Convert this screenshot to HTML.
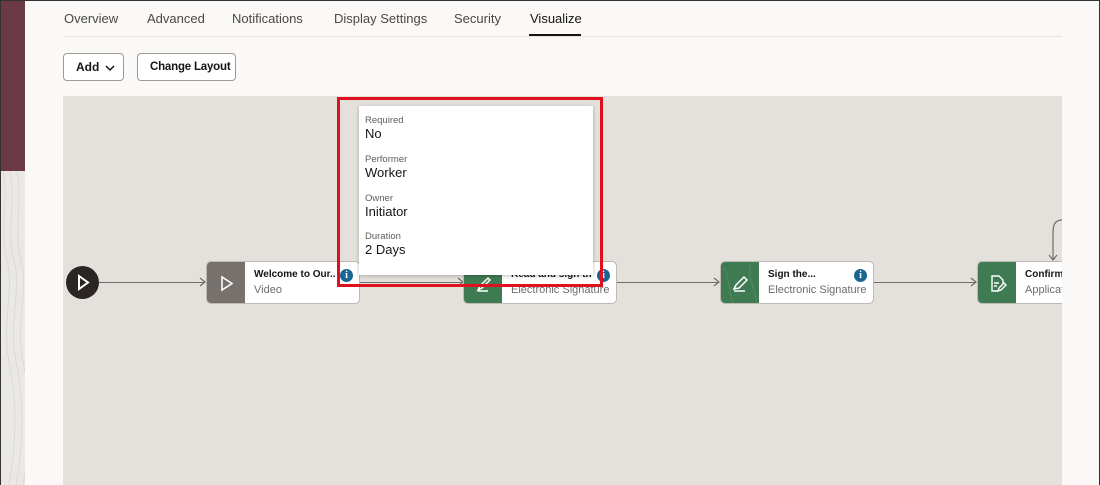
<!DOCTYPE html>
<html><head><meta charset="utf-8">
<style>
*{box-sizing:border-box;margin:0;padding:0}
body{width:1100px;height:485px;overflow:hidden;background:#faf9f8;font-family:"Liberation Sans",sans-serif;position:relative;color:#161513}
.frame{position:absolute;left:0;top:0;width:1100px;height:485px;border:1px solid #333;border-bottom:none;pointer-events:none;z-index:20}
.strip{position:absolute;left:1px;top:0;width:24px;height:485px;background:#eae8e5}
.strip .m{position:absolute;left:0;top:0;width:24px;height:171px;background:#6b3a45}
.tabs{position:absolute;left:63px;top:0;height:37px;width:999px;border-bottom:1px solid #e6e4e1}
.tab{position:absolute;top:11px;font-size:13px;color:#4a4845;white-space:nowrap}
.tab.act{color:#161513}
.ul{position:absolute;left:529px;top:34px;width:52px;height:2px;background:#161513}
.btn{position:absolute;top:53px;height:28px;border:1px solid #9e9a95;border-radius:4px;background:#fff;font-size:12px;font-weight:bold;color:#161513;line-height:26px;padding-left:12px;white-space:nowrap}
.canvas{position:absolute;left:63px;top:96px;width:999px;height:389px;background:#e4e1dd;overflow:hidden}
.node{position:absolute;top:165px;height:43px;width:154px;background:#fff;border:1px solid #bdb9b3;border-radius:5px;overflow:hidden}
.node .ic{position:absolute;left:0;top:0;width:38px;height:43px;background:#3f7b52}
.node .t{position:absolute;left:47px;top:7px;font-size:10px;font-weight:bold;white-space:nowrap;max-width:90px;overflow:hidden;text-overflow:ellipsis}
.node .s{position:absolute;left:47px;top:22px;font-size:11px;color:#6f6c68;white-space:nowrap}
.info{position:absolute;top:7px;left:133px;width:13px;height:13px;border-radius:50%;background:#1b6592;color:#fff;font-size:10px;font-weight:bold;text-align:center;line-height:13px;font-family:"Liberation Serif",serif}
.line{position:absolute;height:1px;background:#6f6c68;top:186px}
.pop{position:absolute;left:359px;top:106px;width:234px;height:169px;background:#fff;box-shadow:0 1px 4px rgba(0,0,0,.25);z-index:5}
.pop .l{position:absolute;left:6px;font-size:9.5px;color:#5f5c58}
.pop .v{position:absolute;left:6px;font-size:13px;color:#161513}
.red{position:absolute;left:337px;top:97px;width:266px;height:190px;border:3px solid #e0101e;z-index:6}
</style></head><body>
<div class="strip"><div class="m"></div>
<svg width="24" height="314" style="position:absolute;top:171px;left:0" fill="none" stroke="#d9d6d2" stroke-width="0.8"><path d="M2 0c6 30-4 60 4 90s-6 60 2 100 8 80 0 124M9 0c6 30-4 60 4 90s-6 60 2 100 8 80 0 124M16 0c6 30-4 60 4 90s-6 60 2 100 8 80 0 124"/></svg></div>
<div class="tabs">
<span class="tab" style="left:1px">Overview</span>
<span class="tab" style="left:84px">Advanced</span>
<span class="tab" style="left:169px">Notifications</span>
<span class="tab" style="left:271px">Display Settings</span>
<span class="tab" style="left:391px">Security</span>
<span class="tab act" style="left:467px">Visualize</span>
</div>
<div class="ul"></div>
<div class="btn" style="left:63px;width:61px">Add<svg width="10" height="8" style="position:absolute;left:41px;top:10px" fill="none" stroke="#161513" stroke-width="1.5"><path d="M1 2l4 4 4-4"/></svg></div>
<div class="btn" style="left:137px;width:99px;font-size:11.5px;letter-spacing:-0.2px">Change Layout</div>

<div class="canvas">
<div class="line" style="left:36px;width:106px"></div>
<div class="line" style="left:296px;width:104px"></div>
<div class="line" style="left:553px;width:103px"></div>
<div class="line" style="left:810px;width:103px"></div>
<svg width="999" height="389" style="position:absolute;left:0;top:0" fill="none" stroke="#6f6c68" stroke-width="1.2">
<path d="M137 182l5 4-5 4M395 182l5 4-5 4M651 182l5 4-5 4M908 182l5 4-5 4"/>
<path d="M999 124c-8 0-9 6-9 14v26M986 159l4 5 4-5"/>
</svg>
<div style="position:absolute;left:3px;top:170px;width:33px;height:33px;border-radius:50%;background:#2b2624"><svg width="33" height="33" fill="none" stroke="#fff" stroke-width="2"><path d="M13 10l9 6.5-9 6.5z"/></svg></div>

<div class="node" style="left:143px"><div class="ic" style="background:#76716c"><svg width="38" height="43" fill="none" stroke="#fff" stroke-width="1.6"><path d="M15 15l10 6.5-10 6.5z"/></svg></div><div class="t">Welcome to Our..</div><div class="s">Video</div><div class="info">i</div></div>

<div class="node" style="left:400px"><div class="ic"><svg width="38" height="43" fill="none" stroke="#fff" stroke-width="1.5"><path d="M14 28l2-4 8-8 2 2-8 8zM14 29h10"/></svg></div><div class="t">Read and sign th</div><div class="s">Electronic Signature</div><div class="info">i</div></div>

<div class="node" style="left:657px"><div class="ic"><svg width="38" height="43" fill="none" stroke="#fff" stroke-width="1.5"><path d="M13 27l2-4 8-8 3 3-8 8zM13 29h11"/><path d="M2 5c8 10 4 20 10 36M30 2c-4 12 4 26 6 40" stroke="#4f8a61" stroke-width="1"/></svg></div><div class="t">Sign the...</div><div class="s">Electronic Signature</div><div class="info">i</div></div>

<div class="node" style="left:914px;width:100px"><div class="ic"><svg width="38" height="43" fill="none" stroke="#fff" stroke-width="1.4"><path d="M20 29h-6V14h7l4 4v4M16 21h5M16 24h3M20 29l1-3 5-5 2 2-5 5z"/></svg></div><div class="t">Confirm</div><div class="s">Application</div></div>
</div>

<div class="pop">
<div class="l" style="top:9px">Required</div><div class="v" style="top:20px">No</div>
<div class="l" style="top:48px">Performer</div><div class="v" style="top:59px">Worker</div>
<div class="l" style="top:87px">Owner</div><div class="v" style="top:98px">Initiator</div>
<div class="l" style="top:125px">Duration</div><div class="v" style="top:136px">2 Days</div>
</div>
<div class="red"></div>
<div class="frame"></div>
</body></html>
